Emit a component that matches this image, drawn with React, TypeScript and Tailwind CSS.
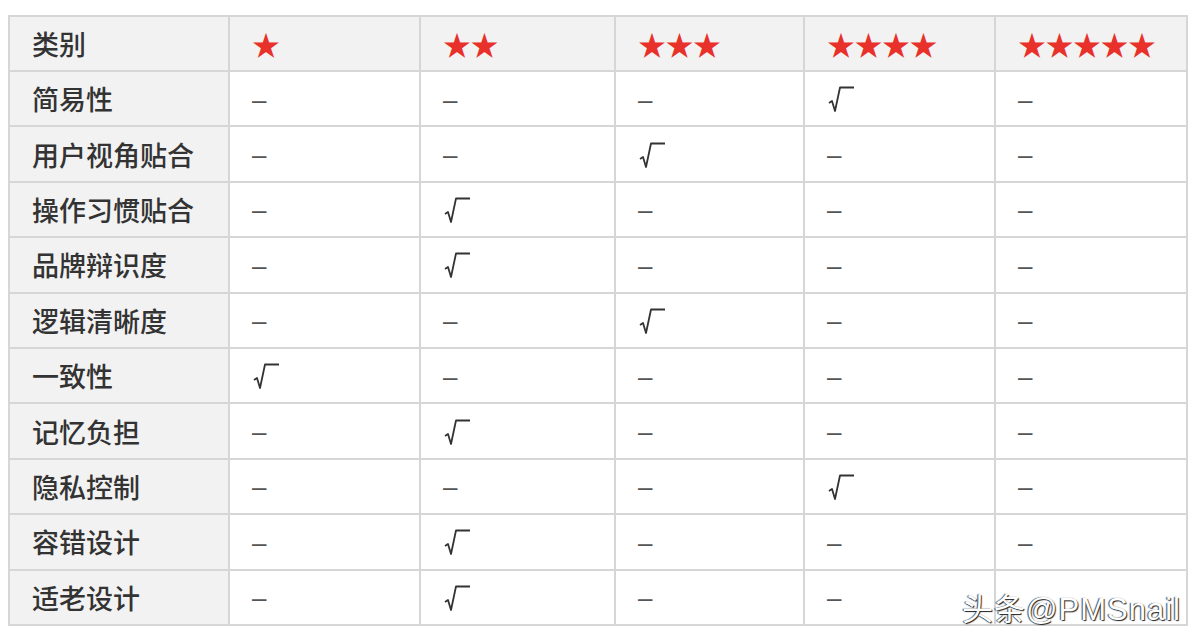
const cols = ['★', '★★', '★★★', '★★★★', '★★★★★']

// index of the column (0-4) that gets the check mark
const rows: [string, number][] = [
  ['简易性', 3],
  ['用户视角贴合', 2],
  ['操作习惯贴合', 1],
  ['品牌辩识度', 1],
  ['逻辑清晰度', 2],
  ['一致性', 0],
  ['记忆负担', 1],
  ['隐私控制', 3],
  ['容错设计', 1],
  ['适老设计', 1],
]

const widths = ['w-[220px]', 'w-[191px]', 'w-[195px]', 'w-[189px]', 'w-[191px]', 'w-[192px]']

const Check = () => (
  <span className="inline-block relative w-[28px] h-[28px] align-middle">
    <svg width="28" height="28" viewBox="0 0 28 28" fill="none" stroke="#333" strokeWidth="1.8" strokeLinejoin="round">
      <path d="M2 17 L5 15 L8 25 L13 1.5 L27 1.5" />
    </svg>
  </span>
)

export default function App() {
  return (
    <div className="relative w-[1200px] h-[643px] bg-white pt-[15px] pl-[8px]" style={{ fontFamily: '"Noto Sans CJK SC", "Noto Sans", sans-serif' }}>
      <table className="table-fixed border-collapse border-2 border-[#d6d6d6] w-[1178px]">
        <colgroup>
          {widths.map((w) => (
            <col key={w} className={w} />
          ))}
        </colgroup>
        <thead>
          <tr className="h-[55px] bg-[#f2f2f2]">
            <th className="border-2 border-[#d6d6d6] pl-[22px] text-left text-[27px] font-medium text-[#333] leading-none">类别</th>
            {cols.map((c) => (
              <th key={c} className="border-2 border-[#d6d6d6] pl-[22px] text-left text-[28px] font-normal text-[#e8312a] leading-none tracking-[-0.5px]">
                {c}
              </th>
            ))}
          </tr>
        </thead>
        <tbody>
          {rows.map(([name, hit], r) => (
            <tr key={name} className="h-[55.4px]">
              <td className="border-2 border-[#d6d6d6] bg-[#f2f2f2] pl-[22px] text-[27px] font-medium text-[#333] leading-none">{name}</td>
              {cols.map((c, i) => (
                <td key={c} className="border-2 border-[#d6d6d6] pl-[22px] text-[26px] text-[#555] leading-none">
                  {i === hit ? (
                    <Check />
                  ) : r === rows.length - 1 && i === 4 ? null : (
                    <span style={{ fontFamily: '"Liberation Sans", sans-serif' }}>–</span>
                  )}
                </td>
              ))}
            </tr>
          ))}
        </tbody>
      </table>
      <div className="absolute right-[19px] bottom-[18px] text-[31px] leading-none tracking-[1px] text-white [text-shadow:1px_1px_1px_#222,-1px_0_1px_#444]" style={{ fontFamily: '"Liberation Sans", "Noto Sans CJK SC", sans-serif' }}>
        头条@PMSnail
      </div>
    </div>
  )
}
